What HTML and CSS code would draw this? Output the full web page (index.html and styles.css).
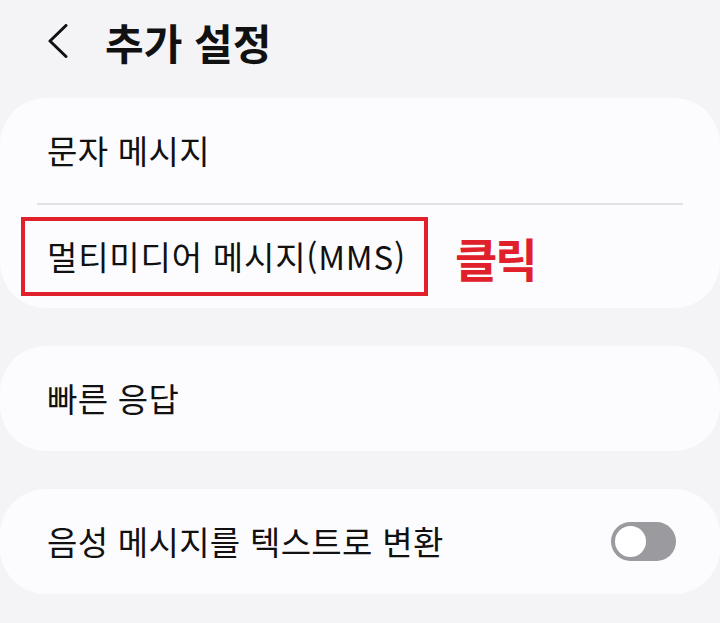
FILE: index.html
```html
<!DOCTYPE html>
<html lang="ko">
<head>
<meta charset="utf-8">
<link rel="stylesheet" href="styles.css">
</head>
<body>
<div class="screen">
  <header class="header">
    <svg class="back" width="22" height="34" viewBox="0 0 22 34"><path d="M19 1.5 L3 17 L19 32.5" fill="none" stroke="#111" stroke-width="3" stroke-linecap="round" stroke-linejoin="round"/></svg>
    <h1 class="title">추가 설정</h1>
  </header>
  <section class="card">
    <div class="row"><span class="label">문자 메시지</span></div>
    <div class="divider"></div>
    <div class="row">
      <span class="label highlight">멀티미디어 메시지(MMS)</span>
      <span class="click">클릭</span>
    </div>
  </section>
  <section class="card">
    <div class="row"><span class="label">빠른 응답</span></div>
  </section>
  <section class="card">
    <div class="row toggle-row">
      <span class="label">음성 메시지를 텍스트로 변환</span>
      <span class="switch"><span class="thumb"></span></span>
    </div>
  </section>
</div>
</body>
</html>
```
FILE: styles.css
```css
* { box-sizing: border-box; }
html, body { margin: 0; padding: 0; }
body {
  background: #f4f4f6;
  font-family: "Noto Sans CJK KR", "Noto Sans", sans-serif;
  color: #111;
  width: 720px;
  height: 623px;
  overflow: hidden;
}
.screen {
  display: flex;
  flex-direction: column;
  gap: 38px;
}
.header {
  height: 60px;
  display: flex;
  align-items: center;
  padding-left: 47px;
  margin-top: 12px;
  margin-bottom: -12px;
}
.back { display: block; margin-top: -2px; }
.title {
  margin: 0 0 0 36px;
  font-size: 42px;
  font-weight: 700;
  letter-spacing: 0;
  line-height: 1;
}
.card {
  background: #fcfcfe;
  border-radius: 46px;
  display: flex;
  flex-direction: column;
}
.row {
  height: 105px;
  display: flex;
  align-items: center;
  padding: 0 44px 0 47px;
}
.label {
  font-size: 33px;
  line-height: 1;
  letter-spacing: 0.3px;
}
.divider {
  height: 2px;
  background: #e2e2e6;
  margin: 0 37px;
}
.card .row + .divider + .row { height: 103px; }
.highlight {
  height: 79px;
  display: flex;
  align-items: center;
  border: 4px solid #e0202a;
  margin-left: -26px;
  padding: 0 18px 0 22px;
  letter-spacing: 0.8px;
}
.click {
  margin-left: 27px;
  font-size: 46px;
  font-weight: 700;
  color: #e0202a;
  letter-spacing: -2px;
  line-height: 1;
}
.toggle-row { justify-content: space-between; }
.switch {
  width: 65px;
  height: 39px;
  border-radius: 20px;
  background: #9b9b9f;
  display: flex;
  align-items: center;
  padding-left: 4px;
}
.thumb {
  width: 31px;
  height: 31px;
  border-radius: 50%;
  background: #fff;
}
```
